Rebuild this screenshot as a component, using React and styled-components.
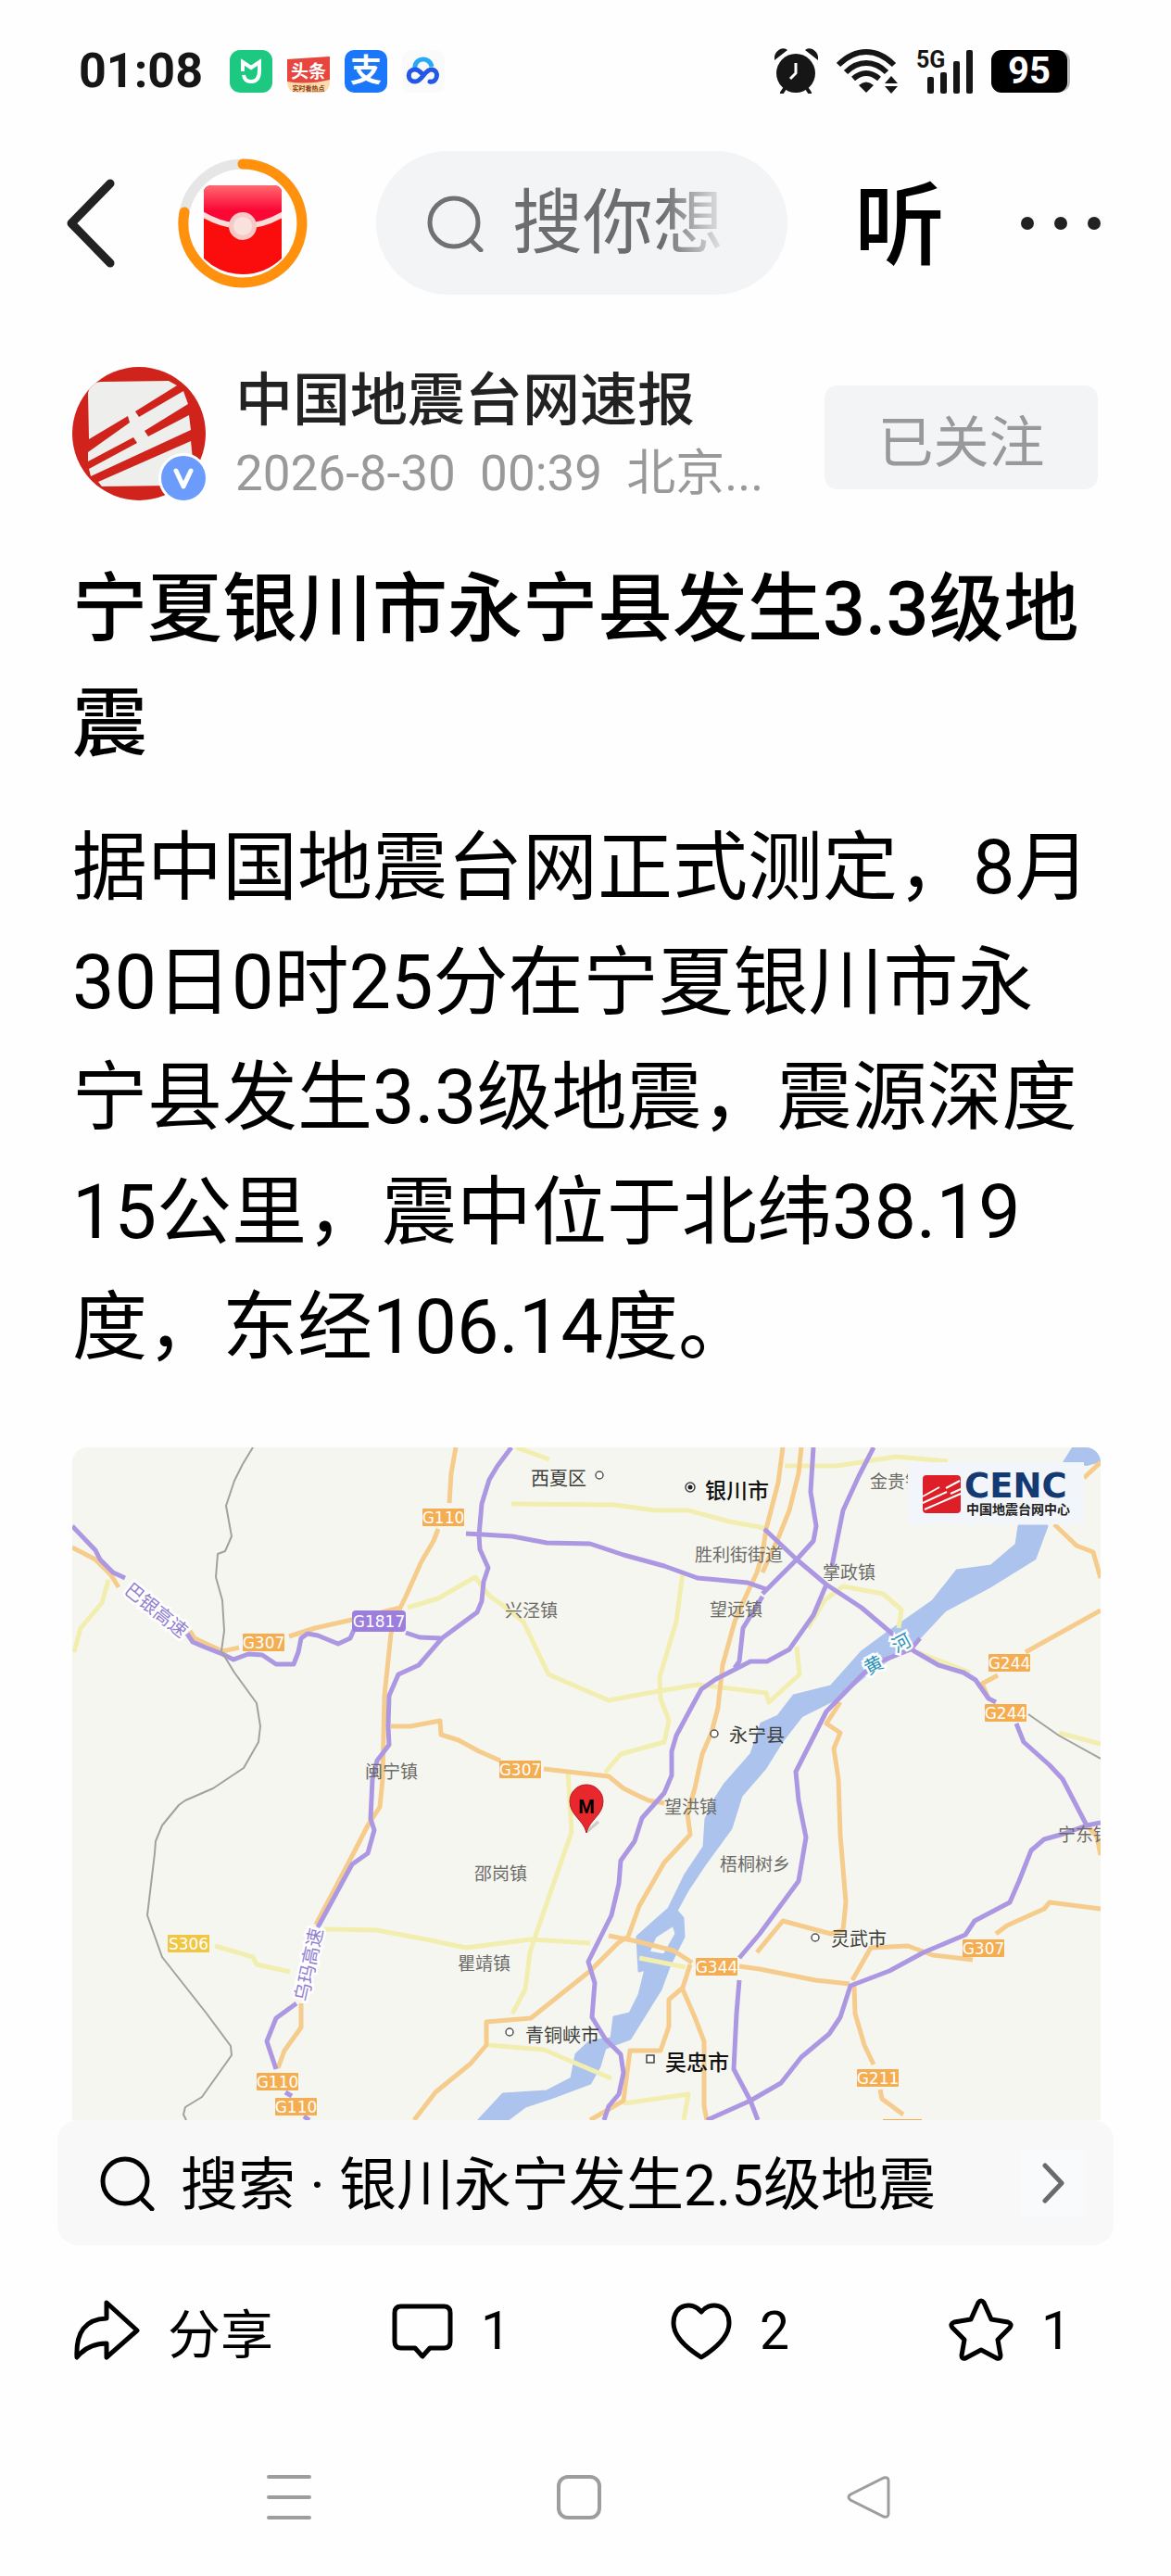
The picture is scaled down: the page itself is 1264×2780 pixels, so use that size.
import React from "react";
import styled, { createGlobalStyle } from "styled-components";

const GlobalStyle = createGlobalStyle`
  * {
    box-sizing: border-box;
  }
  body {
    margin: 0;
    background: #fefefe;
    color: #000;
    font-family: Roboto, "Noto Sans CJK SC", sans-serif;
  }
  button, input {
    font-family: inherit;
    color: inherit;
    border: 0;
    padding: 0;
    margin: 0;
    background: none;
  }
  svg {
    display: block;
    flex-shrink: 0;
  }
`

// roads, grouped by kind, drawn in this order
const minorRoads = [
  "M39 143L32 168L9 195L2 221",
  "M479 0L515 13",
  "M474 61L585 62L629 68L665 68L709 80L747 87",
  "M362 173L395 163L435 140L450 160L464 170L487 188L514 245L579 273L622 265L675 256L749 265L752 275L785 245L782 215",
  "M659 135L652 188L634 248L635 271L644 295L639 318L592 331L575 351",
  "M769 20L825 20L889 10L945 15",
  "M794 195L812 165L832 150L875 158L895 175L892 195",
  "M912 221L969 243",
  "M535 350L539 415L502 521L494 545L489 585L475 611",
  "M272 520L329 521L382 531L425 540L495 531L559 535",
  "M612 551L662 561",
  "M449 645L509 650L582 681",
  "M595 708L665 698L660 726",
  "M154 538L195 550L199 558L235 566",
  "M1065 308L1110 320",
];

const mainRoads = [
  "M0 108L25 121L42 138L50 151",
  "M127 198L132 206L162 220L180 216",
  "M234 204L262 195L302 186L354 173L360 161L377 123L390 101L395 88",
  "M407 60L409 28L414 0",
  "M354 173L344 201L337 268L335 358L332 388L319 408L302 441L263 515",
  "M247 600L247 626L229 651L222 670",
  "M344 301L365 301L397 295L398 310L417 316L439 328L462 338",
  "M509 347L579 355L595 368L609 375L622 381L639 384",
  "M767 0L762 38L749 88L745 115L739 135L725 165L715 188L702 235L697 281L690 308L680 331L672 368L664 395L667 418L639 448L612 495L600 528L589 535L559 565L495 616L447 620L447 645L430 665L392 696L369 726",
  "M787 0L784 28L774 68L762 98L745 135",
  "M579 527L609 533L649 543L669 556",
  "M720 560L742 563L802 575L839 579",
  "M667 558L659 583L644 596L644 625L635 651L602 651L595 705L559 726",
  "M659 585L672 615L682 641L682 711L685 726",
  "M829 275L814 298L829 308L822 325L827 358L829 418L835 491L832 521L819 525L767 511L739 545",
  "M842 575L862 540L902 538L929 548L972 553",
  "M997 525L1009 516L1049 498L1055 491L1110 498",
  "M844 581L845 611L855 645L865 666",
  "M872 693L874 703L897 720",
  "M1110 176L1029 221",
  "M999 246L982 255L989 271",
  "M1060 83L1084 106L1102 113L1110 141",
  "M1092 33L1110 16",
  "M1093 405L1106 420L1110 440",
];

const expressways = [
  "M0 85L25 111L30 121L44 135L57 141",
  "M124 201L130 210L144 216L162 223L174 229L182 226L190 223L205 224L220 234L239 234L244 221L247 206L254 201L265 203L287 212L300 206L304 197",
  "M360 200L375 205L399 206L437 178L442 166L444 145L449 130L440 110L439 95L442 61L450 35L459 20L474 0",
  "M399 206L374 235L352 245L342 268L341 301L342 321L329 338L324 358L322 401L326 413L319 438L302 450L265 518",
  "M242 600L220 616L210 641L220 671",
  "M230 696L237 700",
  "M250 722L256 726",
  "M425 93L475 96L512 103L559 104L595 116L639 128L675 141L729 146L749 153",
  "M745 158L782 121L800 101L803 85L797 48L800 0",
  "M747 88L782 121L814 148L852 173L885 201L909 220L935 235L962 243L975 251L989 271L997 275",
  "M1019 298L1027 318L1055 343L1069 358L1095 408L1110 405",
  "M814 148L800 181L774 218L750 231L732 231L695 250L679 261L667 283L652 311L647 328L647 354L639 373L615 400L607 425L592 446L590 471L582 505L569 531L557 555L564 578L561 615L575 638L592 655L595 675L590 698L579 711L574 726",
  "M865 0L849 31L832 68L820 128",
  "M745 161L724 195L720 231L715 238",
  "M915 206L905 218L875 230L855 243L814 285L781 350L784 381L792 421L784 468L742 525L720 551",
  "M720 575L717 611L714 671L732 705L740 726",
  "M685 726L732 705L765 686L787 658L817 633L829 615L840 581L882 565L919 545L964 526L974 511L1012 491L1022 468L1035 435L1049 423L1070 417L1095 408",
];

const shields = [
  { x: 378, y: 66, text: "G110" },
  { x: 184, y: 201, text: "G307" },
  { x: 461, y: 338, text: "G307" },
  { x: 989, y: 223, text: "G244" },
  { x: 985, y: 277, text: "G244" },
  { x: 673, y: 551, text: "G344" },
  { x: 961, y: 531, text: "G307" },
  { x: 847, y: 671, text: "G211" },
  { x: 199, y: 675, text: "G110" },
  { x: 219, y: 702, text: "G110" },
  { x: 103, y: 526, text: "S306", fill: "#f1c643" },
  { x: 302, y: 176, text: "G1817", fill: "#9c7fdc", w: 58 },
];

const towns = [
  [672, 123, "胜利街街道"],
  [688, 182, "望远镇"],
  [467, 183, "兴泾镇"],
  [810, 142, "掌政镇"],
  [861, 44, "金贵镇"],
  [316, 357, "闽宁镇"],
  [639, 395, "望洪镇"],
  [434, 467, "邵岗镇"],
  [416, 564, "瞿靖镇"],
  [699, 457, "梧桐树乡"],
  [1064, 425, "宁东镇"],
];

const counties = [
  [495, 41, "西夏区", 569, 30],
  [709, 318, "永宁县", 693, 309],
  [819, 538, "灵武市", 802, 529],
  [489, 642, "青铜峡市", 472, 631],
];

function EpicenterMap() {
  return (
    <MapSvg viewBox="0 0 1110 726" role="img" aria-label="震中位置地图">
      <rect width="1110" height="726" fill="#f6f6f0" />
      <g fill="none" strokeLinejoin="round">
        <path
          fill="#acc4ed"
          stroke="#acc4ed"
          strokeWidth="3"
          fillRule="evenodd"
          d="M1022 85L1052 85L1039 120L989 151L942 176L912 208L882 228L857 245L825 271L787 290L766 317L748 346L722 376L711 411L684 448L664 478L652 500L659 508L660 528L645 558L635 585L625 601L602 638L575 648L569 668L559 686L519 701L489 711L469 726L439 726L465 698L512 695L539 681L544 655L559 641L582 638L585 615L602 611L612 591L619 563L612 565L610 528L629 511L644 498L662 461L682 431L684 401L695 378L704 364L733 331L744 298L762 290L779 268L819 258L852 221L879 201L929 166L955 133L992 128L1019 105Z M629 528L649 515L652 525L639 548L622 545Z"
        />
        <path fill="#acc4ed" d="M1079 0L1110 0L1110 16L1095 20L1069 16Z" />
        {minorRoads.map((d) => <path key={d} d={d} stroke="#f2eeb0" strokeWidth="5" />)}
        {mainRoads.map((d) => <path key={d} d={d} stroke="#f6cc8c" strokeWidth="5" />)}
        {expressways.map((d) => <path key={d} d={d} stroke="#ac98e2" strokeWidth="5" />)}
        <path
          stroke="#a2a29d"
          strokeWidth="2"
          d="M195 0L184 18L175 36L166 63L172 96L165 112L157 115L155 140L162 165L164 198L161 220L175 243L199 276L203 301L201 318L185 346L152 368L122 381L115 386L97 408L90 425L89 438L81 505L97 550L145 611L171 646L172 656L140 701L122 712L120 720L123 726"
        />
        <path stroke="#a2a29d" strokeWidth="2" d="M1032 288L1065 311L1110 336" />
      </g>

      {shields.map(({ x, y, text, fill, w }) => (
        <g key={`${x}-${y}`}>
          <rect x={x} y={y} width={w || 45} height={w ? 23 : 19} rx={w ? 4 : 1} fill={fill || "#f5ad51"} />
          <Shield x={x + (w || 45) / 2} y={y + (w ? 18 : 16)}>{text}</Shield>
        </g>
      ))}
      <rect x="875" y="725" width="42" height="1" fill="#f5ad51" />

      {towns.map(([x, y, name]) => <Town key={name} x={x} y={y}>{name}</Town>)}
      {counties.map(([x, y, name, cx, cy]) => (
        <g key={name}>
          <County x={x} y={y}>{name}</County>
          <circle cx={cx} cy={cy} r="4" fill="#fff" stroke="#555" strokeWidth="1.5" />
        </g>
      ))}
      <City x="683" y="55">银川市</City>
      <circle cx="667" cy="43" r="5" fill="#fff" stroke="#444" strokeWidth="1.5" />
      <circle cx="667" cy="43" r="2.5" fill="#222" />
      <City x="640" y="672">吴忠市</City>
      <rect x="620" y="656" width="8" height="8" fill="#fff" stroke="#444" strokeWidth="1.5" />

      <RoadName transform="translate(55 156) rotate(39)">巴银高速</RoadName>
      <RoadName transform="translate(254 599) rotate(-78)">乌玛高速</RoadName>
      <RiverName x="855" y="242" transform="rotate(-28 865 235)">黄</RiverName>
      <RiverName x="885" y="218" transform="rotate(-28 895 211)">河</RiverName>

      <path d="M555 415L568 404" stroke="#ccc" strokeWidth="3" />
      <path
        d="M555 416C552 402 537 397 537 382A18 18 0 0 1 573 382C573 397 558 402 555 416Z"
        fill="#e9282e"
        stroke="#b51d24"
      />
      <PinText x="555" y="395">M</PinText>

      <rect x="902" y="16" width="190" height="67" fill="#f2f5f9" />
      <rect x="918" y="30" width="41" height="41" rx="4" fill="#dd2027" />
      <path
        d="M918 53L936 43M918 60L944 48M943 44L958 36M948 50L959 45M920 67L959 50"
        stroke="#fff"
        strokeWidth="2"
      />
      <LogoText x="963" y="54">CENC</LogoText>
      <LogoSub x="965" y="72">中国地震台网中心</LogoSub>
    </MapSvg>
  );
}

function AppIcons() {
  return (
    <AppIconRow>
      <svg width="46" height="46" viewBox="0 0 46 46">
        <rect width="46" height="46" rx="11" fill="#1dc981" />
        <path d="M14 23V13L23 19L32 13V22" fill="none" stroke="#fff" strokeWidth="4" />
        <path d="M15 27Q16 34 23 34Q32 34 32 22" fill="none" stroke="#fff" strokeWidth="4" />
      </svg>
      <svg width="46" height="46" viewBox="0 0 46 46">
        <path d="M0 10L46 7V34Q46 46 34 46H12Q0 46 0 34Z" fill="#fbdcae" />
        <path d="M0 10L46 7V32Q22 38 0 34Z" fill="#e8453f" />
        <HeadlineMark x="23" y="30">头条</HeadlineMark>
        <HeadlineSub x="23" y="44">实时看热点</HeadlineSub>
      </svg>
      <svg width="46" height="46" viewBox="0 0 46 46">
        <rect width="46" height="46" rx="10" fill="#1a77fb" />
        <PayMark x="23" y="34">支</PayMark>
      </svg>
      {/* two loops with an arc on top */}
      <svg width="46" height="46" viewBox="0 0 46 46">
        <rect width="46" height="46" rx="10" fill="#fafafb" />
        <path d="M14 21C12 8 30 6 32 18" fill="none" stroke="#27a9f5" strokeWidth="5" />
        <path
          d="M30 34C38 36 41 22 32 21C24 21 22 34 14 34C5 34 5 21 14 21C18 21 20 24 22 26"
          fill="none"
          stroke="#2457e6"
          strokeWidth="5"
          strokeLinecap="round"
        />
      </svg>
    </AppIconRow>
  );
}

function SystemIcons() {
  return (
    <SystemIconRow>
      <svg width="47" height="49" viewBox="0 0 47 49" fill="#161616">
        <path d="M0 13Q-1 5 6 1Q11 -1 14 2ZM47 13Q48 5 41 1Q36 -1 33 2Z" />
        <circle cx="23" cy="27" r="21" />
        <path d="M12 42L8 48M34 42L38 48" stroke="#161616" strokeWidth="4" strokeLinecap="round" />
        <path d="M23 16V27L17 33" fill="none" stroke="#fff" strokeWidth="3" />
      </svg>
      <svg width="66" height="48" viewBox="0 0 66 48" fill="none" stroke="#161616" strokeWidth="6">
        <path d="M2 17Q16 3 32 3Q48 3 62 17M10 25Q20 15 32 15Q44 15 54 25M18 32Q25 26 32 26Q39 26 46 32" />
        <path d="M24 39Q32 32 40 39L32 47Z" fill="#161616" stroke="none" />
        <path d="M59 29L66 37H52ZM52 40H66L59 48Z" fill="#161616" stroke="none" />
      </svg>
      <SignalSvg width="61" height="48" viewBox="0 0 61 48" fill="#161616">
        <SignalText x="0" y="20">5G</SignalText>
        <rect x="12" y="30" width="7" height="18" rx="2" />
        <rect x="26" y="25" width="7" height="23" rx="2" />
        <rect x="40" y="13" width="7" height="35" rx="2" />
        <rect x="54" y="1" width="7" height="47" rx="2" />
      </SignalSvg>
      <Battery>95</Battery>
    </SystemIconRow>
  );
}

function App() {
  return (
    <Page lang="zh-CN">
      <GlobalStyle />
      <StatusBar>
        <Clock>01:08</Clock>
        <AppIcons />
        <SystemIcons />
      </StatusBar>

      <TopBar>
        <IconButton aria-label="返回">
          <svg width="52" height="96" viewBox="0 0 52 96">
            <path d="M47 5L5 48L47 91" fill="none" stroke="#222" strokeWidth="9" strokeLinecap="round" strokeLinejoin="round" />
          </svg>
        </IconButton>
        <IconButton aria-label="红包" $left={68}>
          <svg width="140" height="140" viewBox="0 0 140 140">
            <defs>
              <linearGradient id="flap" x1="0" y1="0" x2="0" y2="1">
                <stop offset="0" stopColor="#ff6a70" />
                <stop offset="0.6" stopColor="#fb0736" />
              </linearGradient>
              <clipPath id="packet">
                <path d="M28 37Q28 29 37 29H103Q112 29 112 37V108Q94 125 70 125Q46 125 28 108Z" />
              </clipPath>
            </defs>
            <circle cx="70" cy="70" r="64" fill="none" stroke="#e6e6e6" strokeWidth="11" />
            <path d="M70 6A64 64 0 1 1 7 58" fill="none" stroke="#ff910d" strokeWidth="11" strokeLinecap="round" />
            <g clipPath="url(#packet)">
              <rect x="28" y="29" width="84" height="100" fill="#fc0d0d" />
              <path d="M28 29H112V60Q70 88 28 60Z" fill="url(#flap)" />
              <path d="M26 60Q70 86 114 60" fill="none" stroke="#fcdcd8" strokeWidth="6" />
            </g>
            <circle cx="70" cy="73" r="15" fill="#f7c9c6" />
            <circle cx="70" cy="73" r="10" fill="#f9e2de" />
          </svg>
        </IconButton>
        <SearchBox>
          <svg width="62" height="62" viewBox="0 0 62 62" fill="none" stroke="#6f7173" strokeWidth="5" strokeLinecap="round">
            <circle cx="29" cy="30" r="26" />
            <path d="M49 51L58 60" />
          </svg>
          <SearchInput aria-label="搜索" placeholder="搜你想" />
        </SearchBox>
        <ListenButton>听</ListenButton>
        <IconButton aria-label="更多" $left={82}>
          <svg width="86" height="16" viewBox="0 0 86 16" fill="#222">
            <circle cx="7" cy="8" r="7" />
            <circle cx="43" cy="8" r="7" />
            <circle cx="79" cy="8" r="7" />
          </svg>
        </IconButton>
      </TopBar>

      <main>
        <Author>
          <svg width="144" height="144" viewBox="0 0 144 144">
            <clipPath id="face"><circle cx="72" cy="72" r="72" /></clipPath>
            <g clipPath="url(#face)">
              <rect width="144" height="144" fill="#cf231c" />
              <path
                d="M17 28Q20 16 32 16L104 15L113 20L68 48L72 54L120 26L125 40L78 69L82 75L126 52L128 68L20 118L18 110L70 82L66 76L17 102V92L62 60L60 53L18 78Z"
                fill="#eeeeec"
              />
              <path d="M128 80L130 100L110 128L32 129L28 124Z" fill="#eeeeec" />
            </g>
            <circle cx="120" cy="120" r="27" fill="#fff" />
            <circle cx="120" cy="120" r="24" fill="#6b9cfb" />
            <path d="M112 112L120 129L128 112" fill="none" stroke="#fff" strokeWidth="5" strokeLinejoin="round" strokeLinecap="round" />
          </svg>
          <AuthorText>
            <AuthorName>中国地震台网速报</AuthorName>
            <AuthorMeta>2026-8-30&nbsp; 00:39&nbsp; 北京...</AuthorMeta>
          </AuthorText>
          <FollowButton>已关注</FollowButton>
        </Author>

        <Title>宁夏银川市永宁县发生3.3级地震</Title>
        <Body>
          据中国地震台网正式测定，8月30日0时25分在宁夏银川市永宁县发生3.3级地震，震源深度15公里，震中位于北纬38.19度，东经106.14度。
        </Body>
        <MapFrame>
          <EpicenterMap />
        </MapFrame>

        <RelatedSearch href="#search">
          <svg width="60" height="60" viewBox="0 0 60 60" fill="none" stroke="#000" strokeWidth="5" strokeLinecap="round">
            <circle cx="27" cy="28" r="24" />
            <path d="M46 48L56 58" />
          </svg>
          <RelatedText>搜索 · 银川永宁发生2.5级地震</RelatedText>
          <Arrow>
            <svg width="24" height="44" viewBox="0 0 24 44">
              <path d="M3 3L21 22L3 41" fill="none" stroke="#6a6a6a" strokeWidth="5" strokeLinecap="round" strokeLinejoin="round" />
            </svg>
          </Arrow>
        </RelatedSearch>
      </main>

      <Actions>
        <Action>
          <svg width="72" height="70" viewBox="0 0 72 70">
            <path d="M36 5L69 35L36 64V49Q16 49 4 64Q2 23 36 22Z" />
          </svg>
          分享
        </Action>
        <Action aria-label="评论 1">
          <svg width="66" height="70" viewBox="0 0 66 70">
            <path d="M10 9H56Q63 9 63 16V47Q63 54 56 54H41L33 63L25 54H10Q3 54 3 47V16Q3 9 10 9Z" />
          </svg>
          1
        </Action>
        <Action aria-label="喜欢 2">
          <svg width="66" height="70" viewBox="0 0 66 70">
            <path d="M33 15C24 3 3 6 3 27C3 42 17 54 33 64C49 54 63 42 63 27C63 6 42 3 33 15Z" />
          </svg>
          2
        </Action>
        <Action aria-label="收藏 1">
          <svg width="70" height="70" viewBox="0 0 70 70">
            <path d="M32 5Q35 1 38 5L46 23L64 26Q69 28 66 32L53 45L56 62Q56 66 52 65L35 56L18 65Q14 66 14 62L17 45L4 32Q1 28 6 26L24 23Z" />
          </svg>
          1
        </Action>
      </Actions>

      <SystemNav>
        <IconButton aria-label="菜单">
          <svg width="48" height="48" viewBox="0 0 48 48">
            <path d="M2 2H46M2 24H46M2 46H46" stroke="#9d9d9d" strokeWidth="4" strokeLinecap="round" />
          </svg>
        </IconButton>
        <IconButton aria-label="主屏幕">
          <svg width="48" height="48" viewBox="0 0 48 48">
            <rect x="2" y="2" width="44" height="44" rx="10" fill="none" stroke="#9d9d9d" strokeWidth="4" />
          </svg>
        </IconButton>
        <IconButton aria-label="后退">
          <svg width="48" height="48" viewBox="0 0 48 48">
            <path d="M4 21L40 3Q45 2 45 6V42Q45 46 40 45L4 27Q0 24 4 21Z" fill="none" stroke="#9d9d9d" strokeWidth="3" />
          </svg>
        </IconButton>
      </SystemNav>
    </Page>
  );
}

const Page = styled.div`
  display: flex;
  flex-direction: column;
`

const StatusBar = styled.div`
  display: flex;
  align-items: center;
  height: 153px;
  padding: 0 112px 0 85px;
`
const Clock = styled.span`
  min-width: 163px;
  font-size: 52px;
  font-weight: 700;
  color: #161616;
`
const AppIconRow = styled.div`
  display: flex;
  gap: 16px;
  flex: 1;
`
const SystemIconRow = styled.div`
  display: flex;
  align-items: center;
  gap: 20px;
`
const Battery = styled.span`
  width: 82px;
  height: 46px;
  line-height: 46px;
  border-radius: 11px;
  background: #000;
  box-shadow: 4px 0 0 -1px #bbb;
  color: #fff;
  font-size: 40px;
  font-weight: 700;
  text-align: center;
`

const TopBar = styled.header`
  display: flex;
  align-items: center;
  height: 175px;
  padding: 0 76px 0 72px;
`
const IconButton = styled.button`
  display: flex;
  justify-content: center;
  margin-left: ${(props) => props.$left || 0}px;
`
const SearchBox = styled.label`
  display: flex;
  align-items: center;
  flex: 1;
  gap: 30px;
  height: 155px;
  min-width: 0;
  margin: 0 72px 0 74px;
  padding: 0 66px 0 55px;
  border-radius: 78px;
  background: #f3f4f6;
`
const SearchInput = styled.input`
  flex: 1;
  min-width: 0;
  height: 110px;
  font-size: 76px;
  mask-image: linear-gradient(90deg, #000 70%, transparent 102%);
  &::placeholder {
    color: #6b6d6f;
    opacity: 1;
  }
`
const ListenButton = styled.button`
  padding-top: 8px;
  font-size: 98px;
  line-height: 120px;
  font-weight: 500;
`

const Author = styled.section`
  display: flex;
  align-items: flex-start;
  height: 144px;
  margin-top: 68px;
  padding: 0 79px 0 78px;
`
const AuthorText = styled.div`
  flex: 1;
  min-width: 0;
  margin-left: 32px;
`
const AuthorName = styled.div`
  font-size: 62px;
  line-height: 74px;
  font-weight: 500;
  color: #222;
`
const AuthorMeta = styled.div`
  font-size: 53px;
  line-height: 82px;
  color: #999;
  white-space: nowrap;
`
const FollowButton = styled.button`
  width: 295px;
  height: 112px;
  margin-top: 20px;
  border-radius: 14px;
  background: #f3f4f6;
  color: #999;
  font-size: 60px;
`

const Title = styled.h1`
  margin: 56px 78px 0;
  font-size: 81px;
  line-height: 124px;
  font-weight: 500;
`
const Body = styled.p`
  margin: 31px 78px 0;
  font-size: 81px;
  line-height: 124px;
`
const MapFrame = styled.figure`
  margin: 67px 76px 0 78px;
  border-radius: 16px 16px 0 0;
  overflow: hidden;
`
const MapSvg = styled.svg`
  width: 100%;
  height: auto;
  font-family: "Noto Sans CJK SC", sans-serif;
`
const Shield = styled.text`
  font: 500 17px "DejaVu Sans", sans-serif;
  fill: #fff;
  text-anchor: middle;
`
const Town = styled.text`
  font-size: 19px;
  fill: #6b6b68;
`
const County = styled.text`
  font-size: 20px;
  fill: #3c3c3a;
`
const City = styled.text`
  font-size: 23px;
  font-weight: 500;
  fill: #111;
`
const RoadName = styled.text`
  font-size: 20px;
  fill: #9280cf;
  stroke: #fff;
  stroke-width: 5px;
  paint-order: stroke;
`
const RiverName = styled.text`
  font-size: 20px;
  fill: #2b92b8;
  stroke: #fff;
  stroke-width: 5px;
  paint-order: stroke;
`
const PinText = styled.text`
  font: 700 20px Roboto, sans-serif;
  text-anchor: middle;
`
const LogoText = styled.text`
  font: 700 37px "DejaVu Sans", sans-serif;
  fill: #143a73;
`
const LogoSub = styled.text`
  font-size: 14px;
  font-weight: 700;
  fill: #222;
`
const HeadlineMark = styled.text`
  font-size: 19px;
  font-weight: 700;
  fill: #fff;
  text-anchor: middle;
`
const HeadlineSub = styled.text`
  font-size: 7px;
  font-weight: 700;
  fill: #8a3a12;
  text-anchor: middle;
`
const PayMark = styled.text`
  font-size: 34px;
  font-weight: 700;
  fill: #fff;
  text-anchor: middle;
`
const SignalSvg = styled.svg`
  overflow: visible;
`
const SignalText = styled.text`
  font-size: 25px;
  font-weight: 700;
`

const RelatedSearch = styled.a`
  display: flex;
  align-items: center;
  height: 135px;
  margin: 0 62px;
  padding: 0 30px 0 46px;
  border-radius: 22px;
  background: #f8f8f8;
  color: #000;
  text-decoration: none;
`
const RelatedText = styled.span`
  flex: 1;
  margin-left: 27px;
  padding-bottom: 6px;
  font-size: 62px;
  white-space: nowrap;
`
const Arrow = styled.span`
  display: flex;
  align-items: center;
  justify-content: center;
  width: 70px;
  height: 72px;
  background: #f9fafc;
`

const Actions = styled.footer`
  display: grid;
  grid-template-columns: 344fr 301fr 300fr 161fr;
  margin-top: 46px;
  padding: 0 79px;
`
const Action = styled.button`
  display: flex;
  align-items: center;
  gap: 30px;
  height: 92px;
  font-size: 57px;
  white-space: nowrap;
  svg {
    fill: none;
    stroke: #000;
    stroke-width: 5px;
    stroke-linejoin: round;
  }
`

const SystemNav = styled.nav`
  display: grid;
  grid-template-columns: repeat(3, 1fr);
  margin-top: 110px;
  padding: 0 170px 61px 156px;
`

export default App;
